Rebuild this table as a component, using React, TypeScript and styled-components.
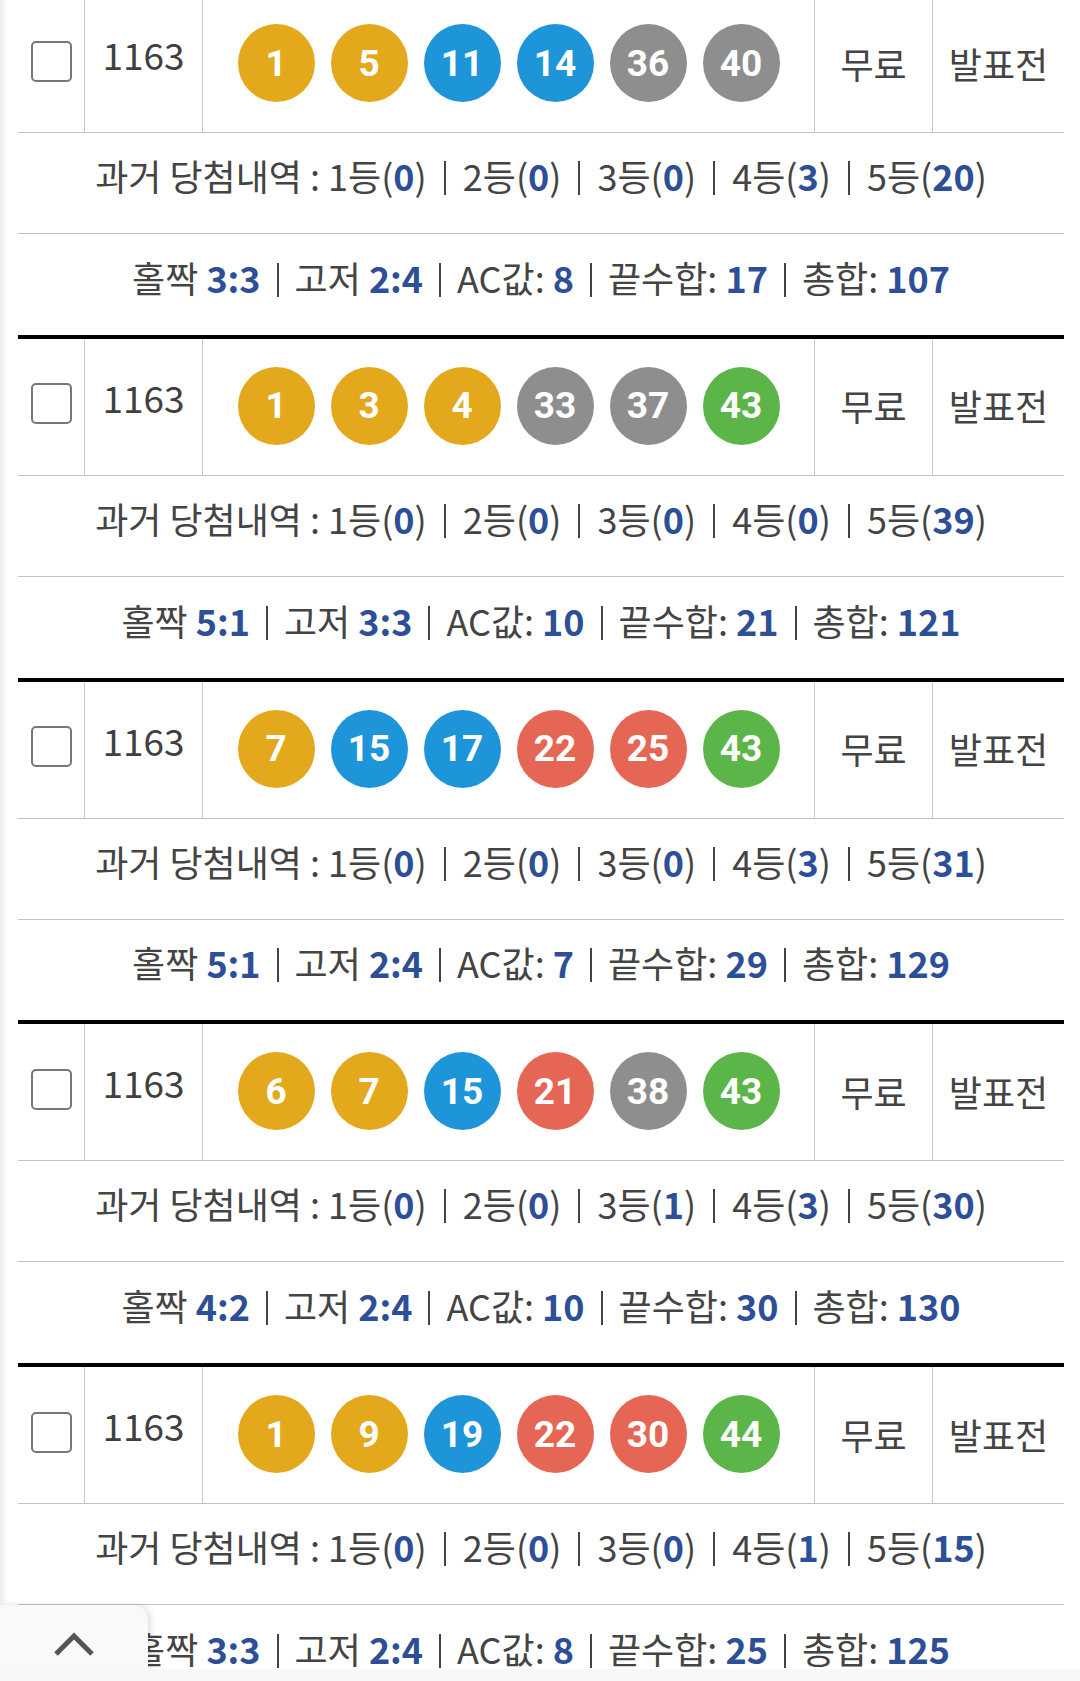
import React from 'react';
import styled, { createGlobalStyle } from 'styled-components';

interface Game {
  balls: number[];
  history: number[];
  oddEven: string;
  highLow: string;
  ac: number;
  endSum: number;
  total: number;
}

const games: Game[] = [
  { balls: [1, 5, 11, 14, 36, 40], history: [0, 0, 0, 3, 20], oddEven: '3:3', highLow: '2:4', ac: 8, endSum: 17, total: 107 },
  { balls: [1, 3, 4, 33, 37, 43], history: [0, 0, 0, 0, 39], oddEven: '5:1', highLow: '3:3', ac: 10, endSum: 21, total: 121 },
  { balls: [7, 15, 17, 22, 25, 43], history: [0, 0, 0, 3, 31], oddEven: '5:1', highLow: '2:4', ac: 7, endSum: 29, total: 129 },
  { balls: [6, 7, 15, 21, 38, 43], history: [0, 0, 1, 3, 30], oddEven: '4:2', highLow: '2:4', ac: 10, endSum: 30, total: 130 },
  { balls: [1, 9, 19, 22, 30, 44], history: [0, 0, 0, 1, 15], oddEven: '3:3', highLow: '2:4', ac: 8, endSum: 25, total: 125 },
];

const ballColor = (n: number) => {
  if (n <= 10) return '#e3a81b';
  if (n <= 20) return '#1e95d9';
  if (n <= 30) return '#e66655';
  if (n <= 40) return '#8e8e8e';
  return '#5cb548';
};

const App: React.FC = () => {
  return (
    <>
      <GlobalStyle />
      <Page>
        {games.map((g, i) => (
          <GameBlock key={i}>
            <BallRow>
              <Cell>
                <Check type="checkbox" />
              </Cell>
              <RoundCell>1163</RoundCell>
              <BallCell>
                {g.balls.map((b) => (
                  <Ball key={b} $color={ballColor(b)}>
                    {b}
                  </Ball>
                ))}
              </BallCell>
              <LabelCell>무료</LabelCell>
              <LabelCell>발표전</LabelCell>
            </BallRow>
            <InfoRow>
              과거 당첨내역 :&nbsp;
              {g.history.map((h, idx) => (
                <React.Fragment key={idx}>
                  {idx > 0 && <Sep $gap={17} />}
                  {idx + 1}등(<Num>{h}</Num>)
                </React.Fragment>
              ))}
            </InfoRow>
            <StatsRow>
              홀짝 <Num>{g.oddEven}</Num>
              <Sep $gap={16} />
              고저 <Num>{g.highLow}</Num>
              <Sep $gap={16} />
              AC값: <Num>{g.ac}</Num>
              <Sep $gap={16} />
              끝수합: <Num>{g.endSum}</Num>
              <Sep $gap={16} />
              총합: <Num>{g.total}</Num>
            </StatsRow>
          </GameBlock>
        ))}
      </Page>
      <TopTab>
        <svg width="42" height="26" viewBox="0 0 42 26">
          <path d="M3 23 L21 5 L39 23" fill="none" stroke="#555" strokeWidth="5" />
        </svg>
      </TopTab>
      <BottomBar />
    </>
  );
};

export default App;

const GlobalStyle = createGlobalStyle`
  html, body {
    margin: 0;
    padding: 0;
    overflow: hidden;
  }
  body {
    background: linear-gradient(to right, #ececec 0, #f6f6f6 4px, #ffffff 8px);
    font-family: "Noto Sans CJK KR", "Noto Sans", sans-serif;
    color: #444;
  }
`;

const Page = styled.div`
  width: 1046px;
  margin: -4px 0 0 18px;
`;

const GameBlock = styled.div`
  border-bottom: 4px solid #000;
`;

const BallRow = styled.div`
  display: grid;
  grid-template-columns: 66px 118px 1fr 118px 132px;
  height: 137px;
  border-bottom: 1px solid #c2c2c2;
  box-sizing: border-box;
`;

const Cell = styled.div`
  display: flex;
  align-items: center;
  justify-content: center;
  & + & {
    border-left: 1px solid #c8c8c8;
  }
`;

const RoundCell = styled(Cell)`
  font-size: 37px;
  color: #404040;
  padding-bottom: 20px;
`;

const BallCell = styled(Cell)`
  gap: 16px;
  padding-bottom: 2px;
`;

const LabelCell = styled(Cell)`
  font-size: 36px;
  color: #444;
  padding-bottom: 3px;
`;

const Check = styled.input`
  appearance: none;
  width: 41px;
  height: 41px;
  margin: 0 0 6px 0;
  border: 2.5px solid #777;
  border-radius: 5px;
  box-sizing: border-box;
  background: #fff;
`;

const Ball = styled.span<{ $color: string }>`
  width: 77px;
  height: 78px;
  border-radius: 50%;
  background: ${(p) => p.$color};
  color: #fff;
  font-family: Roboto, "Noto Sans", sans-serif;
  font-weight: 700;
  font-size: 37px;
  display: flex;
  align-items: center;
  justify-content: center;
`;

const InfoRow = styled.div`
  height: 101px;
  box-sizing: border-box;
  border-bottom: 1px solid #c2c2c2;
  display: flex;
  align-items: center;
  justify-content: center;
  padding-bottom: 16px;
  font-size: 36px;
  white-space: pre;
`;

const StatsRow = styled.div`
  height: 100.75px;
  box-sizing: border-box;
  display: flex;
  align-items: center;
  justify-content: center;
  padding-bottom: 15px;
  font-size: 36px;
  white-space: pre;
`;

const Num = styled.b`
  color: #2c4f97;
  font-weight: 700;
`;

const Sep = styled.span<{ $gap: number }>`
  display: inline-block;
  width: 2px;
  height: 34px;
  margin: 6px ${(p) => p.$gap}px 0;
  background: #444;
`;

const TopTab = styled.div`
  position: fixed;
  left: 0;
  bottom: 12px;
  width: 148px;
  height: 64px;
  background: #f9f9f9;
  border-radius: 0 15px 0 0;
  box-shadow: 3px 0 6px rgba(0, 0, 0, 0.12);
  display: flex;
  align-items: center;
  justify-content: center;
  padding-top: 14px;
  box-sizing: border-box;
  z-index: 2;
`;

const BottomBar = styled.div`
  position: fixed;
  left: 0;
  right: 0;
  bottom: 0;
  height: 12px;
  background: #f8f8f8;
  z-index: 3;
`;
